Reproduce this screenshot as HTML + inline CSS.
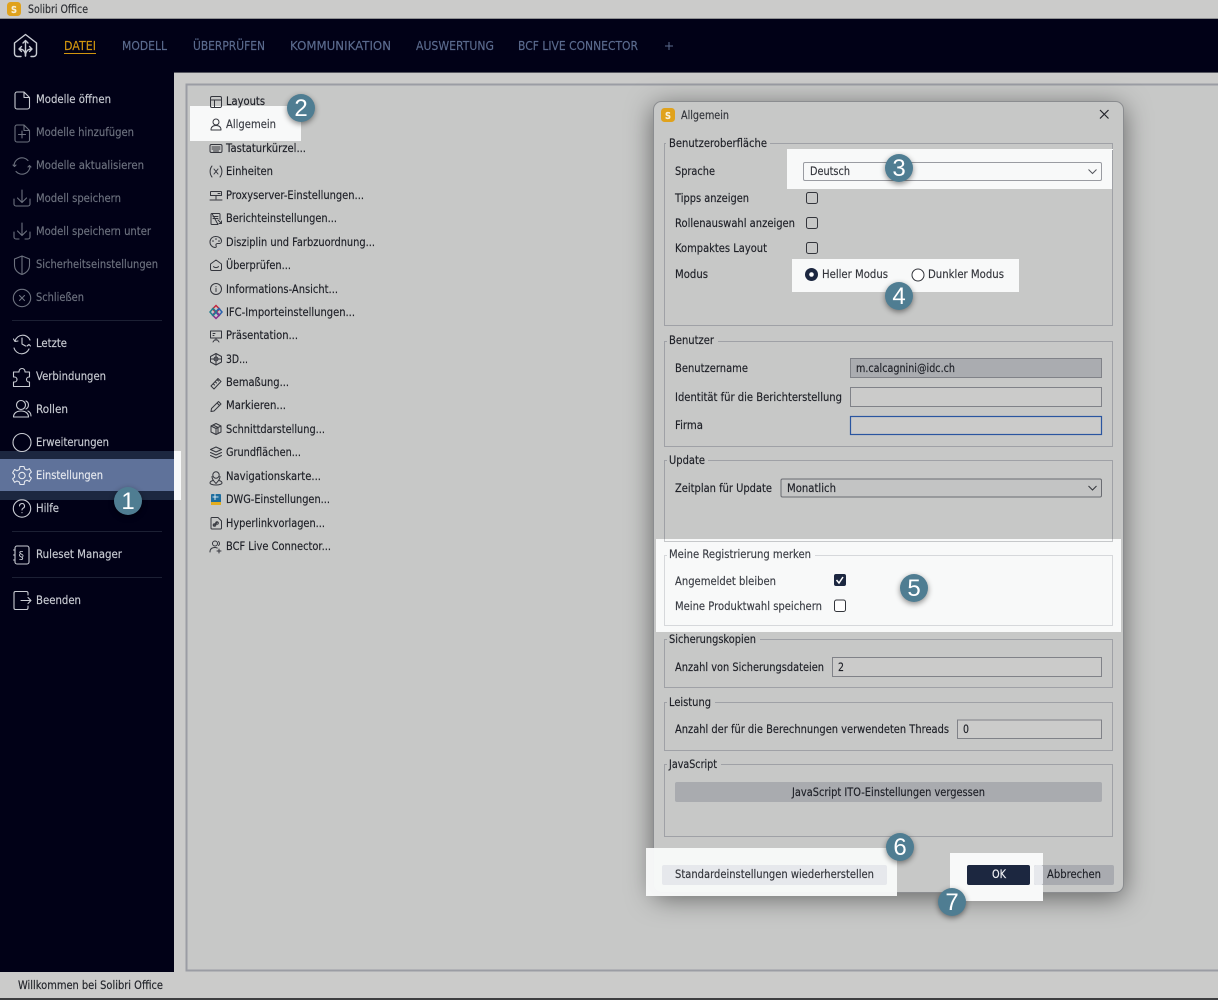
<!DOCTYPE html>
<html lang="de"><head><meta charset="utf-8"><title>Solibri Office</title>
<style>
html,body{margin:0;padding:0;background:#cbcbca;width:1218px;height:1000px;overflow:hidden}
svg{display:block;filter:blur(.35px)}
text{font-family:"DejaVu Sans","Liberation Sans",sans-serif;font-size:11.6px;color:#1d1f26;fill:currentColor;stroke:currentColor;stroke-width:.16}
.s{color:#c9ccd3}.d{color:#6d727f}.n{color:#5b6b8e;font-size:12px}
.b{color:#fff;font-family:"Liberation Sans",sans-serif;font-size:24px;text-anchor:middle;stroke-width:0}
.g{fill:none;stroke:#9fa1a6}.gl{fill:none;stroke:#d6d8db}
.is{fill:none;stroke:#c9ccd3;stroke-width:1.1;stroke-linecap:round;stroke-linejoin:round}
.id{fill:none;stroke:#6d727f;stroke-width:1.1;stroke-linecap:round;stroke-linejoin:round}
.il{fill:none;stroke:#34363d;stroke-width:1;stroke-linecap:round;stroke-linejoin:round}
.sh{filter:drop-shadow(0 2px 3px rgba(0,0,0,.45))}
</style></head><body>
<svg width="1218" height="1000" viewBox="0 0 1218 1000" xmlns="http://www.w3.org/2000/svg">
<!-- base -->
<rect width="1218" height="1000" fill="#cbcbca"/>
<rect y="18" width="1218" height="1" fill="#8f9092"/>
<rect y="19" width="1218" height="53" fill="#010117"/>
<rect y="72" width="1218" height="1" fill="#55565f"/>
<rect y="72" width="174" height="900" fill="#010117"/>
<rect x="186.500" y="84.500" width="1040" height="886" fill="#c7c8c7" stroke="#9b9da4" stroke-width="2"/>
<rect y="998" width="1218" height="2" fill="#3d3e40"/>
<!-- title bar -->
<rect x="7" y="2" width="14" height="14" rx="3.500" fill="#e0a21c"/>
<text x="11" y="13" style="font-size:10px;font-weight:bold;color:#f8f0d8" textLength="6" lengthAdjust="spacingAndGlyphs">S</text>
<text x="28" y="13" textLength="60" lengthAdjust="spacingAndGlyphs" style="color:#2c2e33">Solibri Office</text>
<!-- logo -->
<g fill="none" stroke="#c9ccd3" stroke-width="1.400" stroke-linecap="round" stroke-linejoin="round">
<path d="M14.500 43l11-8.500 11 8.500v10.500a3 3 0 0 1-3 3H31M21 56.500h-3.500a3 3 0 0 1-3-3V43"/>
<path d="M25.500 53V41M23 43l2.500-2.500L28 43"/>
<path d="M25.500 56c0-4-2-7-6-7M21.500 46.500L19 49l2.500 2.500"/>
<path d="M25.500 56c0-4 2-7 6-7M29.500 46.500L32 49l-2.500 2.500"/>
</g>
<!-- nav -->
<text x="64" y="50" class="n" style="color:#d1950f" textLength="32" lengthAdjust="spacingAndGlyphs">DATEI</text>
<rect x="64" y="53" width="32" height="1" fill="#d1950f"/>
<text x="122" y="50" class="n" textLength="45" lengthAdjust="spacingAndGlyphs">MODELL</text>
<text x="193" y="50" class="n" textLength="72" lengthAdjust="spacingAndGlyphs">ÜBERPRÜFEN</text>
<text x="290" y="50" class="n" textLength="101" lengthAdjust="spacingAndGlyphs">KOMMUNIKATION</text>
<text x="416" y="50" class="n" textLength="78" lengthAdjust="spacingAndGlyphs">AUSWERTUNG</text>
<text x="518" y="50" class="n" textLength="120" lengthAdjust="spacingAndGlyphs">BCF LIVE CONNECTOR</text>
<path d="M669 42v8M665 46h8" stroke="#5b6b8e" fill="none"/>
<!-- sidebar selection -->
<rect y="451" width="174" height="49" fill="#1c2740"/>
<rect y="459" width="174" height="32" fill="#5f729a"/>
<rect x="174" y="451" width="7" height="49" fill="#f8f9f9"/>
<!-- sidebar separators -->
<rect x="12" y="320" width="150" height="1" fill="#1c2034"/>
<rect x="12" y="531" width="150" height="1" fill="#1c2034"/>
<rect x="12" y="577" width="150" height="1" fill="#1c2034"/>
<!-- sidebar text -->
<text x="36" y="103" class="s" textLength="75" lengthAdjust="spacingAndGlyphs">Modelle öffnen</text>
<text x="36" y="136" class="d" textLength="98" lengthAdjust="spacingAndGlyphs">Modelle hinzufügen</text>
<text x="36" y="169" class="d" textLength="108" lengthAdjust="spacingAndGlyphs">Modelle aktualisieren</text>
<text x="36" y="202" class="d" textLength="85" lengthAdjust="spacingAndGlyphs">Modell speichern</text>
<text x="36" y="235" class="d" textLength="115" lengthAdjust="spacingAndGlyphs">Modell speichern unter</text>
<text x="36" y="268" class="d" textLength="122" lengthAdjust="spacingAndGlyphs">Sicherheitseinstellungen</text>
<text x="36" y="301" class="d" textLength="48" lengthAdjust="spacingAndGlyphs">Schließen</text>
<text x="36" y="347" class="s" textLength="31" lengthAdjust="spacingAndGlyphs">Letzte</text>
<text x="36" y="380" class="s" textLength="70" lengthAdjust="spacingAndGlyphs">Verbindungen</text>
<text x="36" y="413" class="s" textLength="32" lengthAdjust="spacingAndGlyphs">Rollen</text>
<text x="36" y="446" class="s" textLength="73" lengthAdjust="spacingAndGlyphs">Erweiterungen</text>
<text x="36" y="479" style="color:#e6e9ef" textLength="67" lengthAdjust="spacingAndGlyphs">Einstellungen</text>
<text x="36" y="512" class="s" textLength="23" lengthAdjust="spacingAndGlyphs">Hilfe</text>
<text x="36" y="558" class="s" textLength="86" lengthAdjust="spacingAndGlyphs">Ruleset Manager</text>
<text x="36" y="604" class="s" textLength="45" lengthAdjust="spacingAndGlyphs">Beenden</text>
<!-- sidebar icons -->
<path class="is" d="M15 94a2 2 0 0 1 2-2h7l5.500 5.500V107a2 2 0 0 1-2 2H17a2 2 0 0 1-2-2zM24 92v5.500h5.500"/>
<path class="id" d="M15 127a2 2 0 0 1 2-2h7l5.500 5.500V140a2 2 0 0 1-2 2H17a2 2 0 0 1-2-2zM24 125v5.500h5.500M22 131v7M18.500 134.500h7"/>
<path class="id" d="M14 166a8 8 0 0 1 14-5.500M30 166a8 8 0 0 1-14 5.500M13 165l1.500 1.500L16 165M28 167l1.500-1.500 1.500 1.500"/>
<path class="id" d="M22 190v12M17.500 198l4.500 4.500 4.500-4.500M14 199v5a2 2 0 0 0 2 2h12a2 2 0 0 0 2-2v-5"/>
<path class="id" d="M22 223v12M17.500 231l4.500 4.500 4.500-4.500M14 232v5a2 2 0 0 0 2 2h3M25 239h3a2 2 0 0 0 2-2v-5"/>
<path class="id" d="M22 256l7.500 3v6c0 5-3.500 8-7.500 9.500-4-1.500-7.500-4.500-7.500-9.500v-6zM22 256v18"/>
<circle class="id" cx="22" cy="298" r="8.700"/><path class="id" d="M19.500 295.500l5 5M24.500 295.500l-5 5"/>
<path class="is" d="M15 341a8 8 0 0 1 15-1M29 349a8 8 0 0 1-15-1M22 338v6l3.500 2M13.500 339l1.500 2.500L18 341M30.500 346l-1.500-1.500-2 1.500"/>
<path class="is" d="M19 372v-.5a3 3 0 0 1 6 0v.5h4.500v5H29a2.500 2.500 0 0 0 0 5h.5v4.500h-16V382h1a2.500 2.500 0 0 0 0-5h-1v-5z"/>
<circle class="is" cx="21" cy="405" r="4.500"/><path class="is" d="M13.500 417c0-4 3.500-6 7.500-6s7.500 2 7.500 6zM26 401a4.500 4.500 0 0 1 0 8M28 411c2 1 3 3 3 5"/>
<circle class="is" cx="22" cy="442.500" r="9"/>
<g transform="translate(22 475.500)"><circle class="is" style="stroke:#e6e9ef" r="3.200"/><path class="is" style="stroke:#e6e9ef" d="M-2-9h4l.7 2.500 2.300 1 2.400-1.300 2 3.400-2 1.800v2.400l2 1.800-2 3.400-2.400-1.300-2.300 1L2 9h-4l-.7-2.500-2.300-1-2.400 1.300-2-3.400 2-1.800v-2.400l-2-1.800 2-3.400 2.400 1.300 2.300-1z"/></g>
<circle class="is" cx="22" cy="508.500" r="8.700"/><path class="is" d="M19.500 506a2.500 2.500 0 1 1 3.500 2.300c-.7.4-1 .8-1 1.700M22 512.500v.2"/>
<path class="is" d="M17 546h10a2 2 0 0 1 2 2v14a2 2 0 0 1-2 2H17a2 2 0 0 1-2-2v-14a2 2 0 0 1 2-2zM15 550h-1.500M15 555h-1.500M15 560h-1.500"/>
<text x="18.500" y="559" class="s" style="font-size:11px;stroke-width:0">§</text>
<path class="is" d="M28 595v-2a1.500 1.500 0 0 0-1.500-1.500h-11A1.500 1.500 0 0 0 14 593v15a1.500 1.500 0 0 0 1.500 1.500h11a1.500 1.500 0 0 0 1.500-1.500v-2M21 600.500h10M28 597.500l3 3-3 3"/>
<!-- list highlight -->
<rect x="190" y="106" width="111" height="35" fill="#f8f9f9"/>
<!-- list text -->
<text x="226" y="105" textLength="39" lengthAdjust="spacingAndGlyphs">Layouts</text>
<text x="226" y="128" textLength="50" lengthAdjust="spacingAndGlyphs" style="color:#3a3d44">Allgemein</text>
<text x="226" y="152" textLength="80" lengthAdjust="spacingAndGlyphs">Tastaturkürzel...</text>
<text x="226" y="175" textLength="47" lengthAdjust="spacingAndGlyphs">Einheiten</text>
<text x="226" y="199" textLength="138" lengthAdjust="spacingAndGlyphs">Proxyserver-Einstellungen...</text>
<text x="226" y="222" textLength="111" lengthAdjust="spacingAndGlyphs">Berichteinstellungen...</text>
<text x="226" y="246" textLength="149" lengthAdjust="spacingAndGlyphs">Disziplin und Farbzuordnung...</text>
<text x="226" y="269" textLength="65" lengthAdjust="spacingAndGlyphs">Überprüfen...</text>
<text x="226" y="293" textLength="112" lengthAdjust="spacingAndGlyphs">Informations-Ansicht...</text>
<text x="226" y="316" textLength="129" lengthAdjust="spacingAndGlyphs">IFC-Importeinstellungen...</text>
<text x="226" y="339" textLength="72" lengthAdjust="spacingAndGlyphs">Präsentation...</text>
<text x="226" y="363" textLength="22" lengthAdjust="spacingAndGlyphs">3D...</text>
<text x="226" y="386" textLength="63" lengthAdjust="spacingAndGlyphs">Bemaßung...</text>
<text x="226" y="409" textLength="60" lengthAdjust="spacingAndGlyphs">Markieren...</text>
<text x="226" y="433" textLength="99" lengthAdjust="spacingAndGlyphs">Schnittdarstellung...</text>
<text x="226" y="456" textLength="75" lengthAdjust="spacingAndGlyphs">Grundflächen...</text>
<text x="226" y="480" textLength="95" lengthAdjust="spacingAndGlyphs">Navigationskarte...</text>
<text x="226" y="503" textLength="104" lengthAdjust="spacingAndGlyphs">DWG-Einstellungen...</text>
<text x="226" y="527" textLength="99" lengthAdjust="spacingAndGlyphs">Hyperlinkvorlagen...</text>
<text x="226" y="550" textLength="105" lengthAdjust="spacingAndGlyphs">BCF Live Connector...</text>
<!-- list icons -->
<path class="il" d="M212 96.500h8a1.500 1.500 0 0 1 1.500 1.500v8a1.500 1.500 0 0 1-1.500 1.500h-8a1.500 1.500 0 0 1-1.500-1.500v-8a1.500 1.500 0 0 1 1.500-1.500zM210.500 100h11M214.500 100v7.500"/>
<circle class="il" cx="216" cy="122" r="3"/><path class="il" d="M211 130c0-3 2-4.500 5-4.500s5 1.500 5 4.500z"/>
<path class="il" d="M211.500 144.500h9a1.500 1.500 0 0 1 1.500 1.500v5a1.500 1.500 0 0 1-1.500 1.500h-9A1.500 1.500 0 0 1 210 151v-5a1.500 1.500 0 0 1 1.500-1.500zM212 147h8M212 149h8M213.500 151h5"/>
<path class="il" d="M212 166c-2.500 3-2.500 8 0 11M220 166c2.500 3 2.500 8 0 11M214 169l4 5M218 169l-4 5"/>
<path class="il" d="M211 191.500h10a.5.500 0 0 1 .5.500v3.500h-11V192a.5.500 0 0 1 .5-.5zM216 195.500v3.500M210 200h12M218 193.500h2"/>
<path class="il" d="M212 213.500h7a1 1 0 0 1 1 1v5M218 224.500h-6a1 1 0 0 1-1-1v-9a1 1 0 0 1 1-1zM213 216.500h5M213 218.500h5M218 220l3.500 3.500M221.500 221v2.500H219"/>
<path class="il" d="M216 236.500a5.500 5.500 0 1 0-1 11c1.500 0 1.500-1 1-2s.5-2 1.500-2h2c1 0 2-1 2-2.500 0-2.500-2.500-4.500-5.500-4.500z"/><circle cx="213" cy="241" r=".8" fill="#34363d"/><circle cx="216" cy="239" r=".8" fill="#34363d"/><circle cx="219" cy="241" r=".8" fill="#34363d"/>
<path class="il" d="M216 260l5.500 4v5a1.500 1.500 0 0 1-1.500 1.500h-8a1.500 1.500 0 0 1-1.500-1.500v-5zM213.500 266.500c1 1.500 4 1.500 5 0"/>
<circle class="il" cx="216" cy="289" r="5.500"/><path class="il" d="M216 288.500v3M216 286.500v.2"/>
<g fill="none" stroke-width="1.500"><path d="M216 305.500l3.500 3.500-3.500 3.500-3.500-3.500z" stroke="#c4263d"/><path d="M219 308.500l3 3.500-3 3.500-3.500-3.500z" stroke="#2a62ae"/><path d="M216 311.500l3.500 3.500-3.500 3.500-3.500-3.500z" stroke="#8a2c8e"/><path d="M213 308.500l3.500 3.500-3.500 3.500-3-3.500z" stroke="#1f7f8e"/></g>
<path class="il" d="M210.500 331h11v7h-11zM216 338v2M213 342l1.500-2h3l1.500 2M213 333.500h2M213 335.500h1"/>
<path class="il" d="M216 353.500l5.500 3v5.500l-5.500 3-5.500-3v-5.500zM210.500 359h11M216 353.500v11"/><circle class="il" cx="216" cy="359" r="2"/>
<path class="il" d="M211 386l7-7.500 3 3-7 7.500zM213.500 384l1 1M215.500 382l1 1M217.500 380l1 1"/>
<path class="il" d="M211 411.500l.5-3 7-7 2.500 2.500-7 7zM217 403l2.500 2.500"/>
<path class="il" d="M216 423.500l5 2.500v6l-5 2.500-5-2.500v-6zM211 426l5 2.500 5-2.500M216 428.500v6M213 425l5 2.500v5"/>
<path class="il" d="M216 447l5.500 2.500-5.500 2.500-5.500-2.500zM210.500 452.500l5.500 2.500 5.500-2.500M210.500 455.500l5.500 2.500 5.500-2.500"/>
<circle class="il" cx="216" cy="475" r="3.200"/><path class="il" d="M216 483.500c-1.500-2-4-3.500-4-7M216 483.500c1.500-2 4-3.500 4-7M213 480.500c-2 .5-3 1.500-3 2.500s2.500 2 6 2 6-1 6-2-1-2-3-2.500"/>
<rect x="211" y="494" width="10" height="11" rx="1" fill="#1d6d9e"/><rect x="211" y="502" width="10" height="3" fill="#e3ad1f"/><path d="M215 494v6M212.500 497h6" stroke="#fff" fill="none" stroke-width=".8"/>
<path class="il" d="M212 517.500h6l3.500 3.500v7a1 1 0 0 1-1 1H212a1 1 0 0 1-1-1v-9.500a1 1 0 0 1 1-1zM214 525.500l3-3"/><circle class="il" cx="214.500" cy="525" r="1.300"/><circle class="il" cx="217" cy="523" r="1.300"/>
<circle class="il" cx="215" cy="543.500" r="2.500"/><path class="il" d="M210 552c0-3 2-4.500 5-4.500 1 0 1.500.2 2.300.5M218.500 541.500a2.500 2.500 0 0 1 0 4M219 549v4M217 551h4"/>
<!-- dialog -->
<rect x="653.500" y="101.500" width="470" height="791" rx="8" fill="#c7c8c7" stroke="#8b8d90" style="filter:drop-shadow(0 5px 13px rgba(0,0,0,.5))"/>
<rect x="661" y="108" width="14" height="14" rx="3.500" fill="#e0a21c"/>
<text x="665" y="119" style="font-size:10px;font-weight:bold;color:#f8f0d8" textLength="6" lengthAdjust="spacingAndGlyphs">S</text>
<text x="681" y="119" textLength="48" lengthAdjust="spacingAndGlyphs" style="color:#33353b">Allgemein</text>
<path d="M1100 110l8.500 8.500M1108.500 110l-8.500 8.500" stroke="#22242a" stroke-width="1.200" fill="none"/>
<!-- highlights -->
<rect x="787" y="149" width="326" height="40" fill="#f8f9f9"/>
<rect x="792" y="259" width="227" height="33" fill="#f8f9f9"/>
<rect x="656" y="539" width="465" height="93" fill="#f8f9f9"/>
<rect x="646" y="848" width="251" height="48" fill="#f8f9f9" fill-opacity=".97"/>
<rect x="950" y="853" width="93" height="48" fill="#f8f9f9"/>
<!-- group boxes -->
<path class="g" d="M664.500 147v178.500h448V143.500H770M666 143.500h-1.500v4"/>
<rect x="787" y="149" width="326" height="1" fill="#f8f9f9"/>
<path class="g" d="M664.500 345v101.500h448V341.500H718M667 341.500h-2.500v4"/>
<path class="g" d="M664.500 464v75M1112.500 539V460.500H708M667 460.500h-2.500v4"/>
<path class="g" style="stroke:#c6c8ca" d="M664.500 539v2.500h448V539"/>
<path class="gl" d="M664.500 559v66.500h448V555.500H815M667 555.500h-2.500v4"/>
<path class="g" d="M664.500 643v44.500h448V639.500H760M667 639.500h-2.500v4"/>
<path class="g" d="M664.500 706v44.500h448V702.500H715M667 702.500h-2.500v4"/>
<path class="g" d="M664.500 768v68.500h448V764.500H721M667 764.500h-2.500v4"/>
<!-- group legends -->
<text x="669" y="147" textLength="98" lengthAdjust="spacingAndGlyphs">Benutzeroberfläche</text>
<text x="669" y="344" textLength="45" lengthAdjust="spacingAndGlyphs">Benutzer</text>
<text x="669" y="464" textLength="36" lengthAdjust="spacingAndGlyphs">Update</text>
<text x="669" y="558" textLength="142" lengthAdjust="spacingAndGlyphs" style="color:#3a3d44">Meine Registrierung merken</text>
<text x="669" y="643" textLength="87" lengthAdjust="spacingAndGlyphs">Sicherungskopien</text>
<text x="669" y="706" textLength="42" lengthAdjust="spacingAndGlyphs">Leistung</text>
<text x="669" y="768" textLength="48" lengthAdjust="spacingAndGlyphs">JavaScript</text>
<!-- Benutzeroberflaeche -->
<text x="675" y="175" textLength="40" lengthAdjust="spacingAndGlyphs">Sprache</text>
<rect x="803.500" y="162.500" width="298" height="18" rx="1.500" fill="#f8f9f9" stroke="#9a9ca2"/>
<text x="810" y="175" textLength="40" lengthAdjust="spacingAndGlyphs" style="color:#33353b">Deutsch</text>
<path d="M1088.500 169.500l4 4 4-4" stroke="#55575d" fill="none"/>
<text x="675" y="202" textLength="74" lengthAdjust="spacingAndGlyphs">Tipps anzeigen</text>
<rect x="806.500" y="192.500" width="11" height="11" rx="2" fill="none" stroke="#33353b"/>
<text x="675" y="227" textLength="120" lengthAdjust="spacingAndGlyphs">Rollenauswahl anzeigen</text>
<rect x="806.500" y="217.500" width="11" height="11" rx="2" fill="none" stroke="#33353b"/>
<text x="675" y="252" textLength="92" lengthAdjust="spacingAndGlyphs">Kompaktes Layout</text>
<rect x="806.500" y="242.500" width="11" height="11" rx="2" fill="none" stroke="#33353b"/>
<text x="675" y="278" textLength="33" lengthAdjust="spacingAndGlyphs">Modus</text>
<circle cx="811.500" cy="274.500" r="6.500" fill="#1c2740"/><circle cx="811.500" cy="274.500" r="2.300" fill="#fff"/>
<text x="822" y="278" textLength="66" lengthAdjust="spacingAndGlyphs" style="color:#33353b">Heller Modus</text>
<circle cx="918" cy="275" r="6" fill="#fff" stroke="#33353b"/>
<text x="928" y="278" textLength="76" lengthAdjust="spacingAndGlyphs" style="color:#33353b">Dunkler Modus</text>
<!-- Benutzer -->
<text x="675" y="372" textLength="73" lengthAdjust="spacingAndGlyphs">Benutzername</text>
<rect x="850.500" y="358.500" width="251" height="19" fill="#aaacb0" stroke="#808288"/>
<text x="856" y="372" textLength="99" lengthAdjust="spacingAndGlyphs">m.calcagnini@idc.ch</text>
<text x="675" y="401" textLength="167" lengthAdjust="spacingAndGlyphs">Identität für die Berichterstellung</text>
<rect x="850.500" y="387.500" width="251" height="19" fill="#cbcbca" stroke="#808288"/>
<text x="675" y="429" textLength="28" lengthAdjust="spacingAndGlyphs">Firma</text>
<rect x="850.500" y="416.500" width="251" height="18" fill="#cbcbca" stroke="#2a55a0" stroke-width="1.200"/>
<!-- Update -->
<text x="675" y="492" textLength="97" lengthAdjust="spacingAndGlyphs">Zeitplan für Update</text>
<rect x="781" y="479" width="320.500" height="18" rx="1.500" fill="#c3c4c4" stroke="#6a6c72"/>
<text x="787" y="492" textLength="49" lengthAdjust="spacingAndGlyphs">Monatlich</text>
<path d="M1088.500 486l4 4 4-4" stroke="#33353b" fill="none"/>
<!-- Registrierung -->
<text x="675" y="585" textLength="101" lengthAdjust="spacingAndGlyphs" style="color:#3a3d44">Angemeldet bleiben</text>
<rect x="834" y="574" width="12" height="12" rx="2" fill="#1c2740"/>
<path d="M836.500 580l2.500 3 4-6" stroke="#fff" stroke-width="1.500" fill="none"/>
<text x="675" y="610" textLength="147" lengthAdjust="spacingAndGlyphs" style="color:#3a3d44">Meine Produktwahl speichern</text>
<rect x="834.500" y="600" width="11" height="11.500" rx="2" fill="#fff" stroke="#33353b"/>
<!-- Sicherung -->
<text x="675" y="671" textLength="149" lengthAdjust="spacingAndGlyphs">Anzahl von Sicherungsdateien</text>
<rect x="832.500" y="657.500" width="269" height="19" fill="#cbcbca" stroke="#808288"/>
<text x="838" y="671" textLength="6" lengthAdjust="spacingAndGlyphs">2</text>
<!-- Leistung -->
<text x="675" y="733" textLength="274" lengthAdjust="spacingAndGlyphs">Anzahl der für die Berechnungen verwendeten Threads</text>
<rect x="957.500" y="720" width="144" height="18.500" fill="#cbcbca" stroke="#808288"/>
<text x="963" y="733" textLength="6" lengthAdjust="spacingAndGlyphs">0</text>
<!-- JS -->
<rect x="675" y="782" width="427" height="20" rx="2" fill="#a9abaf"/>
<text x="792" y="796" textLength="193" lengthAdjust="spacingAndGlyphs">JavaScript ITO-Einstellungen vergessen</text>
<!-- buttons -->
<rect x="662" y="865" width="225" height="20" rx="2" fill="#e6e8ec"/>
<text x="675" y="878" textLength="199" lengthAdjust="spacingAndGlyphs" style="color:#33353b">Standardeinstellungen wiederherstellen</text>
<rect x="967" y="865" width="63" height="20" rx="2" fill="#1c2740"/>
<text x="992" y="878" textLength="14" lengthAdjust="spacingAndGlyphs" style="color:#f2f3f6">OK</text>
<rect x="1034" y="865" width="80" height="20" rx="2" fill="#a9abb0"/>
<rect x="1034" y="865" width="9" height="20" rx="2" fill="#e6e8ec"/>
<text x="1047" y="878" textLength="54" lengthAdjust="spacingAndGlyphs">Abbrechen</text>
<!-- status -->
<text x="18" y="989" textLength="145" lengthAdjust="spacingAndGlyphs" style="color:#22242a">Willkommen bei Solibri Office</text>
<!-- badges -->
<g class="sh" fill="#4f7d92"><circle cx="128" cy="501" r="14"/><circle cx="301" cy="108" r="14"/><circle cx="899" cy="168" r="14"/><circle cx="899" cy="296" r="14"/><circle cx="914" cy="588" r="14"/><circle cx="900" cy="847" r="14"/><circle cx="952" cy="902" r="14"/></g>
<text x="128" y="509" class="b">1</text>
<text x="301" y="116" class="b">2</text>
<text x="899" y="176" class="b">3</text>
<text x="899" y="304" class="b">4</text>
<text x="914" y="596" class="b">5</text>
<text x="900" y="855" class="b">6</text>
<text x="952" y="910" class="b">7</text>
</svg>
</body></html>
